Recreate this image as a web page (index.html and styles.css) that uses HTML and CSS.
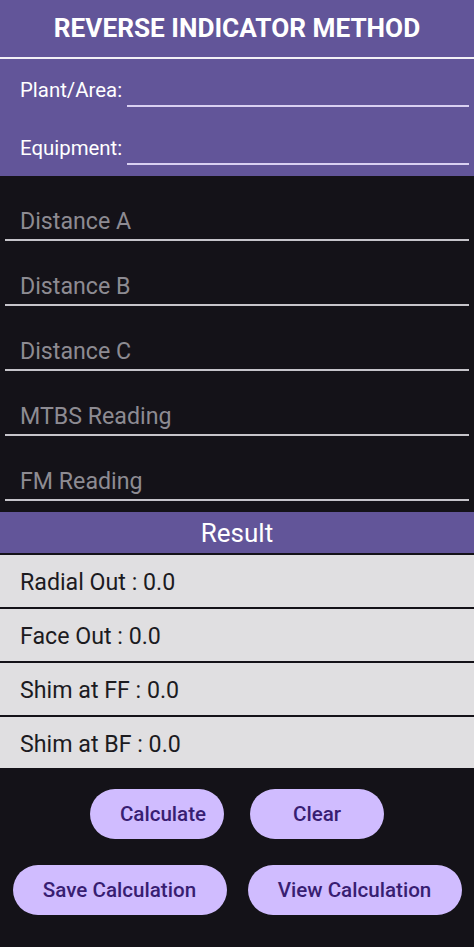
FILE: index.html
```html
<!DOCTYPE html>
<html>
<head>
<meta charset="utf-8">
<link rel="stylesheet" href="styles.css">
</head>
<body>
<div class="app">
  <header class="header">
    <h1 class="title">REVERSE INDICATOR METHOD</h1>
    <div class="meta">
      <div class="meta-row">
        <span class="meta-label">Plant/Area:</span>
        <span class="meta-field"></span>
      </div>
      <div class="meta-row">
        <span class="meta-label">Equipment:</span>
        <span class="meta-field"></span>
      </div>
    </div>
  </header>

  <section class="inputs">
    <div class="input-row"><span class="hint">Distance A</span></div>
    <div class="input-row"><span class="hint">Distance B</span></div>
    <div class="input-row"><span class="hint">Distance C</span></div>
    <div class="input-row"><span class="hint">MTBS Reading</span></div>
    <div class="input-row"><span class="hint">FM Reading</span></div>
  </section>

  <div class="result-bar">Result</div>
  <section class="results">
    <div class="result-row">Radial Out : 0.0</div>
    <div class="result-row">Face Out : 0.0</div>
    <div class="result-row">Shim at FF : 0.0</div>
    <div class="result-row">Shim at BF : 0.0</div>
  </section>

  <section class="actions">
    <div class="btn-row small">
      <button class="btn btn-calc">Calculate</button>
      <button class="btn">Clear</button>
    </div>
    <div class="btn-row wide">
      <button class="btn">Save Calculation</button>
      <button class="btn">View Calculation</button>
    </div>
  </section>
</div>
</body>
</html>
```
FILE: styles.css
```css
* { box-sizing: border-box; }
html, body {
  margin: 0;
  padding: 0;
  background: #141218;
  font-family: Roboto, "Noto Sans", "Liberation Sans", sans-serif;
}
.app {
  width: 474px;
  min-height: 947px;
  background: #141218;
}
.header {
  background: #625599;
}
.title {
  margin: 0;
  height: 57px;
  line-height: 57px;
  text-align: center;
  color: #ffffff;
  font-size: 26.2px;
  font-weight: 700;
  border-bottom: 2px solid #f2f0f6;
  box-sizing: content-box;
}
.meta {
  padding: 0 5px 3px 20px;
}
.meta-row {
  display: flex;
  align-items: flex-end;
  height: 57px;
  padding-bottom: 9px;
  gap: 5px;
}
.meta-row + .meta-row { padding-bottom: 8px; }
.meta-label {
  color: #ffffff;
  font-size: 20.4px;
  line-height: 24px;
  margin-bottom: 5px;
  white-space: nowrap;
}
.meta-field {
  flex: 1;
  height: 30px;
  border-bottom: 2px solid #d9d0f2;
}
.inputs {
  padding: 0 5px 11px 5px;
}
.input-row {
  height: 65px;
  display: flex;
  align-items: flex-end;
  padding: 0 0 4px 15px;
  border-bottom: 2px solid #c6c4ca;
}
.hint {
  color: #8d8b92;
  font-size: 23.2px;
  line-height: 27px;
}
.result-bar {
  background: #625599;
  color: #ffffff;
  height: 41px;
  line-height: 42px;
  text-align: center;
  font-size: 26px;
}
.results {
  display: flex;
  flex-direction: column;
}
.result-row {
  background: #e0dfe1;
  border-top: 2px solid #141218;
  height: 54px;
  display: flex;
  align-items: center;
  padding: 2px 0 0 20px;
  color: #1c1b1f;
  font-size: 23.2px;
}
.result-row:last-child { height: 53px; }
.actions {
  padding: 21px 0 20px 0;
  display: flex;
  flex-direction: column;
  gap: 26px;
}
.btn-row {
  display: flex;
  justify-content: center;
}
.btn-row.small { gap: 26px; }
.btn-row.wide { gap: 21px; }
.btn {
  border: none;
  border-radius: 26px;
  background: #d0bcff;
  color: #381e72;
  font-family: Roboto, "Noto Sans", "Liberation Sans", sans-serif;
  font-size: 20.6px;
  font-weight: 500;
  height: 50px;
  padding: 0;
}
.btn-row.small .btn { width: 134px; }
.btn-row.wide .btn { width: 214px; }
.btn-calc { padding-left: 12px; }
```
